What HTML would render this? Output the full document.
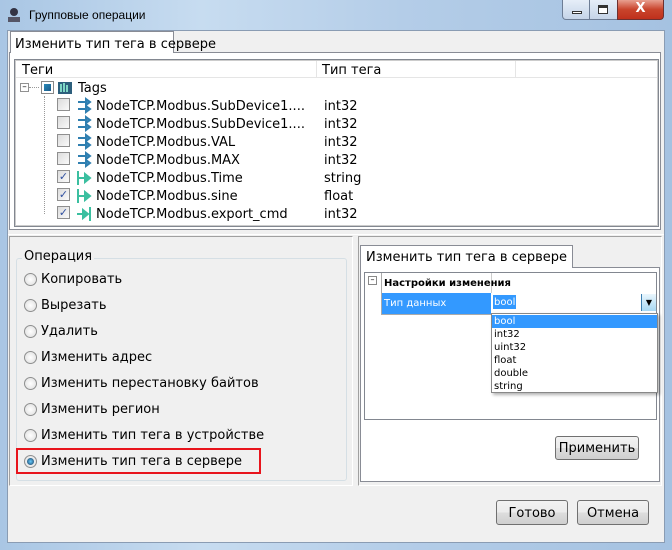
<!DOCTYPE html><html><head><meta charset="utf-8"><style>
*{box-sizing:border-box;margin:0;padding:0}
body{width:672px;height:550px;overflow:hidden;font-family:"DejaVu Sans","Liberation Sans",sans-serif;font-size:13px;color:#000;position:relative;background:linear-gradient(90deg,#a9c6e4,#c7dcf0 30%,#b4cde8 60%,#a5c2e1);}
.a{position:absolute}
.t{font-family:"Liberation Sans","DejaVu Sans",sans-serif}
.btn{position:absolute;border:1px solid #707070;border-radius:3px;background:linear-gradient(#f2f2f2,#ebebeb 50%,#dddddd 51%,#cfcfcf);text-align:center;font-size:13px;line-height:25px}
.cb{position:absolute;width:13px;height:13px;border:1px solid #8f8f8f;background:linear-gradient(135deg,#dcdcdc,#fafafa)}
.row{position:absolute;left:96px;font-size:13px;line-height:18px;white-space:nowrap}
.ty{position:absolute;left:324px;line-height:18px}
.rad{position:absolute;left:24px;width:13px;height:13px;border-radius:50%;border:1px solid #8e8f8f;background:radial-gradient(#fff,#dcdcdc)}
.rl{position:absolute;left:41px;line-height:18px;white-space:nowrap}
.dot{position:absolute;left:44px;border-left:1px dotted #999;}
</style></head><body>
<svg class="a" style="left:6px;top:7px" width="16" height="16"><circle cx="8" cy="5" r="4" fill="#334"/><rect x="2" y="10" width="12" height="5" fill="#556"/></svg>
<div class="a t" style="left:29px;top:8px;font-size:12px">Групповые операции</div>
<div class="a" style="left:562px;top:0;width:56px;height:20px;border:1px solid #6d7d95;border-top:none;border-radius:0 0 0 4px;background:linear-gradient(#e6eef8,#c5d4e8)"></div>
<div class="a" style="left:589px;top:0;width:1px;height:20px;background:#6d7d95"></div>
<div class="a" style="left:572px;top:11px;width:10px;height:3px;background:#fff;border:1px solid #333"></div>
<div class="a" style="left:598px;top:5px;width:10px;height:9px;border:1px solid #333;background:#fff;box-shadow:inset 0 2px 0 #333"></div>
<div class="a" style="left:617px;top:0;width:47px;height:20px;border:1px solid #6d3030;border-top:none;border-radius:0 0 4px 0;background:linear-gradient(#e8a090,#c9442c 50%,#c0301c);color:#fff;font-weight:bold;text-align:center;font-size:13px;line-height:18px">X</div>
<div class="a" style="left:7px;top:30px;width:658px;height:513px;background:#f0f0f0;border:1px solid #8a9cb3"></div>
<div class="a" style="left:9px;top:52px;width:652px;height:178px;border:1px solid #898c95;background:#fff"></div>
<div class="a" style="left:10px;top:31px;width:164px;height:22px;border:1px solid #898c95;border-bottom:none;background:#fff"></div>
<div class="a" style="left:15px;top:37px;font-size:13px">Изменить тип тега в сервере</div>
<div class="a" style="left:14px;top:59px;width:645px;height:168px;border:1px solid #828790;background:#fff;box-shadow:inset 0 0 0 1px #ccc"></div>
<div class="a" style="left:16px;top:61px;width:641px;height:17px;border-bottom:1px solid #e5e5e5;background:#fff"></div>
<div class="a" style="left:316px;top:61px;width:1px;height:17px;background:#e5e5e5"></div>
<div class="a" style="left:515px;top:61px;width:1px;height:17px;background:#e5e5e5"></div>
<div class="a" style="left:22px;top:63px">Теги</div>
<div class="a" style="left:322px;top:63px">Тип тега</div>
<div class="a" style="left:20px;top:83px;width:9px;height:9px;border:1px solid #919191;font-size:9px;line-height:6px;text-align:center">–</div>
<div class="a" style="left:29px;top:87px;width:10px;border-top:1px dotted #999"></div>
<div class="a" style="left:41px;top:81px;width:13px;height:13px;border:1px solid #888;background:#fff"><div style="margin:2px;width:7px;height:7px;background:linear-gradient(135deg,#2a8ab8,#1a5a8a)"></div></div>
<svg class="a" style="left:57px;top:79px" width="16" height="16"><rect x="1" y="3" width="14" height="12" fill="#2d5f7c"/><path d="M4 5v8M7 4v9M10 6v7" stroke="#9fd" stroke-width="1.5"/></svg>
<div class="a" style="left:78px;top:80px;line-height:18px">Tags</div>
<div class="dot" style="top:96px;height:118px"></div>
<div class="cb" style="left:57px;top:98px"></div><div class="cb" style="left:57px;top:116px"></div><div class="cb" style="left:57px;top:134px"></div><div class="cb" style="left:57px;top:152px"></div>
<div class="cb" style="left:57px;top:170px;color:#3050a0;font-size:11px;line-height:11px;text-align:center">✓</div>
<div class="cb" style="left:57px;top:188px;color:#3050a0;font-size:11px;line-height:11px;text-align:center">✓</div>
<div class="cb" style="left:57px;top:206px;color:#3050a0;font-size:11px;line-height:11px;text-align:center">✓</div>
<svg class="a" style="left:76px;top:97px" width="16" height="72">
<g stroke="#2f7fb0" stroke-width="2" fill="#3d8ec4"><path d="M2 5h10M2 12h10" /><path d="M10 2l4 3-4 3zM10 9l4 3-4 3z"/><path d="M2 23h10M2 30h10"/><path d="M10 20l4 3-4 3zM10 27l4 3-4 3z"/><path d="M2 41h10M2 48h10"/><path d="M10 38l4 3-4 3zM10 45l4 3-4 3z"/><path d="M2 59h10M2 66h10"/><path d="M10 56l4 3-4 3zM10 63l4 3-4 3z"/></g></svg>
<svg class="a" style="left:76px;top:169px" width="16" height="54"><g stroke="#3bbfa0" stroke-width="2" fill="#3bbfa0"><path d="M2 2v14M2 9h9"/><path d="M9 5l5 4-5 4z"/><path d="M2 20v14M2 27h9"/><path d="M9 23l5 4-5 4z"/><path d="M14 38v14M1 45h9"/><path d="M7 41l5 4-5 4z"/></g></svg>
<div class="row" style="top:98px">NodeTCP.Modbus.SubDevice1....</div><div class="ty" style="top:98px">int32</div>
<div class="row" style="top:116px">NodeTCP.Modbus.SubDevice1....</div><div class="ty" style="top:116px">int32</div>
<div class="row" style="top:134px">NodeTCP.Modbus.VAL</div><div class="ty" style="top:134px">int32</div>
<div class="row" style="top:152px">NodeTCP.Modbus.MAX</div><div class="ty" style="top:152px">int32</div>
<div class="row" style="top:170px">NodeTCP.Modbus.Time</div><div class="ty" style="top:170px">string</div>
<div class="row" style="top:188px">NodeTCP.Modbus.sine</div><div class="ty" style="top:188px">float</div>
<div class="row" style="top:206px">NodeTCP.Modbus.export_cmd</div><div class="ty" style="top:206px">int32</div>
<div class="a" style="left:8px;top:234px;width:656px;height:1px;background:#fff"></div>
<div class="a" style="left:9px;top:236px;width:344px;height:250px;border:1px solid #a0a0a0;border-right-color:#fff;border-bottom-color:#fff"></div>
<div class="a" style="left:16px;top:258px;width:331px;height:223px;border:1px solid #d5dfe5;border-radius:3px"></div>
<div class="a" style="left:22px;top:249px;background:#f0f0f0;padding:0 2px">Операция</div>
<div class="rad" style="top:273px"></div><div class="rl" style="top:271px">Копировать</div>
<div class="rad" style="top:299px"></div><div class="rl" style="top:297px">Вырезать</div>
<div class="rad" style="top:325px"></div><div class="rl" style="top:323px">Удалить</div>
<div class="rad" style="top:351px"></div><div class="rl" style="top:349px">Изменить адрес</div>
<div class="rad" style="top:377px"></div><div class="rl" style="top:375px">Изменить перестановку байтов</div>
<div class="rad" style="top:403px"></div><div class="rl" style="top:401px">Изменить регион</div>
<div class="rad" style="top:429px"></div><div class="rl" style="top:427px">Изменить тип тега в устройстве</div>
<div class="rad" style="top:455px"><div style="margin:2px;width:7px;height:7px;border-radius:50%;background:radial-gradient(#6cf,#135)"></div></div><div class="rl" style="top:453px">Изменить тип тега в сервере</div>
<div class="a" style="left:16px;top:448px;width:245px;height:26px;border:2px solid #e8141c"></div>
<div class="a" style="left:358px;top:236px;width:304px;height:250px;border:1px solid #a0a0a0;border-right-color:#fff;border-bottom-color:#fff"></div>
<div class="a" style="left:360px;top:267px;width:300px;height:215px;border:1px solid #898c95;background:#fff"></div>
<div class="a" style="left:360px;top:245px;width:213px;height:23px;border:1px solid #898c95;border-bottom:none;background:#fff"></div>
<div class="a" style="left:366px;top:250px">Изменить тип тега в сервере</div>
<div class="a" style="left:364px;top:272px;width:293px;height:148px;border:1px solid #828790;background:#fff"></div>
<div class="a" style="left:368px;top:276px;width:9px;height:9px;border:1px solid #888;font-size:8px;line-height:6px;text-align:center">–</div>
<div class="a" style="left:381px;top:273px;width:1px;height:42px;background:#aaa"></div>
<div class="a" style="left:491px;top:273px;width:1px;height:20px;background:#ccc"></div>
<div class="a" style="left:384px;top:278px;font-size:10px;font-weight:bold">Настройки изменения</div>
<div class="a" style="left:382px;top:293px;width:109px;height:21px;background:#3399ff;color:#fff;font-size:10px;line-height:22px;padding-left:2px">Тип данных</div>
<div class="a" style="left:382px;top:314px;width:109px;height:1px;background:#aaa"></div>
<div class="a" style="left:492px;top:294px;width:164px;height:19px;background:#fff"></div>
<div class="a" style="left:493px;top:295px;height:14px;background:#3399ff;color:#fff;font-size:10px;line-height:15px;padding:0 1px">bool</div>
<div class="a" style="left:641px;top:294px;width:15px;height:17px;border-left:1px solid #3c7fb1;background:linear-gradient(#eaf6fd,#a7d9f5);text-align:center;font-size:8px;line-height:17px">▼</div>
<div class="a" style="left:491px;top:313px;width:167px;height:80px;border:1px solid #888;background:#fff;box-shadow:2px 2px 3px rgba(0,0,0,.3);font-size:10px;line-height:13px;padding-top:1px">
<div style="background:#3399ff;color:#fff;padding-left:2px">bool</div><div style="padding-left:2px">int32</div><div style="padding-left:2px">uint32</div><div style="padding-left:2px">float</div><div style="padding-left:2px">double</div><div style="padding-left:2px">string</div></div>
<div class="btn" style="left:555px;top:436px;width:84px;height:24px;line-height:23px">Применить</div>
<div class="btn" style="left:496px;top:500px;width:72px;height:25px">Готово</div>
<div class="btn" style="left:577px;top:500px;width:72px;height:25px">Отмена</div>
</body></html>
